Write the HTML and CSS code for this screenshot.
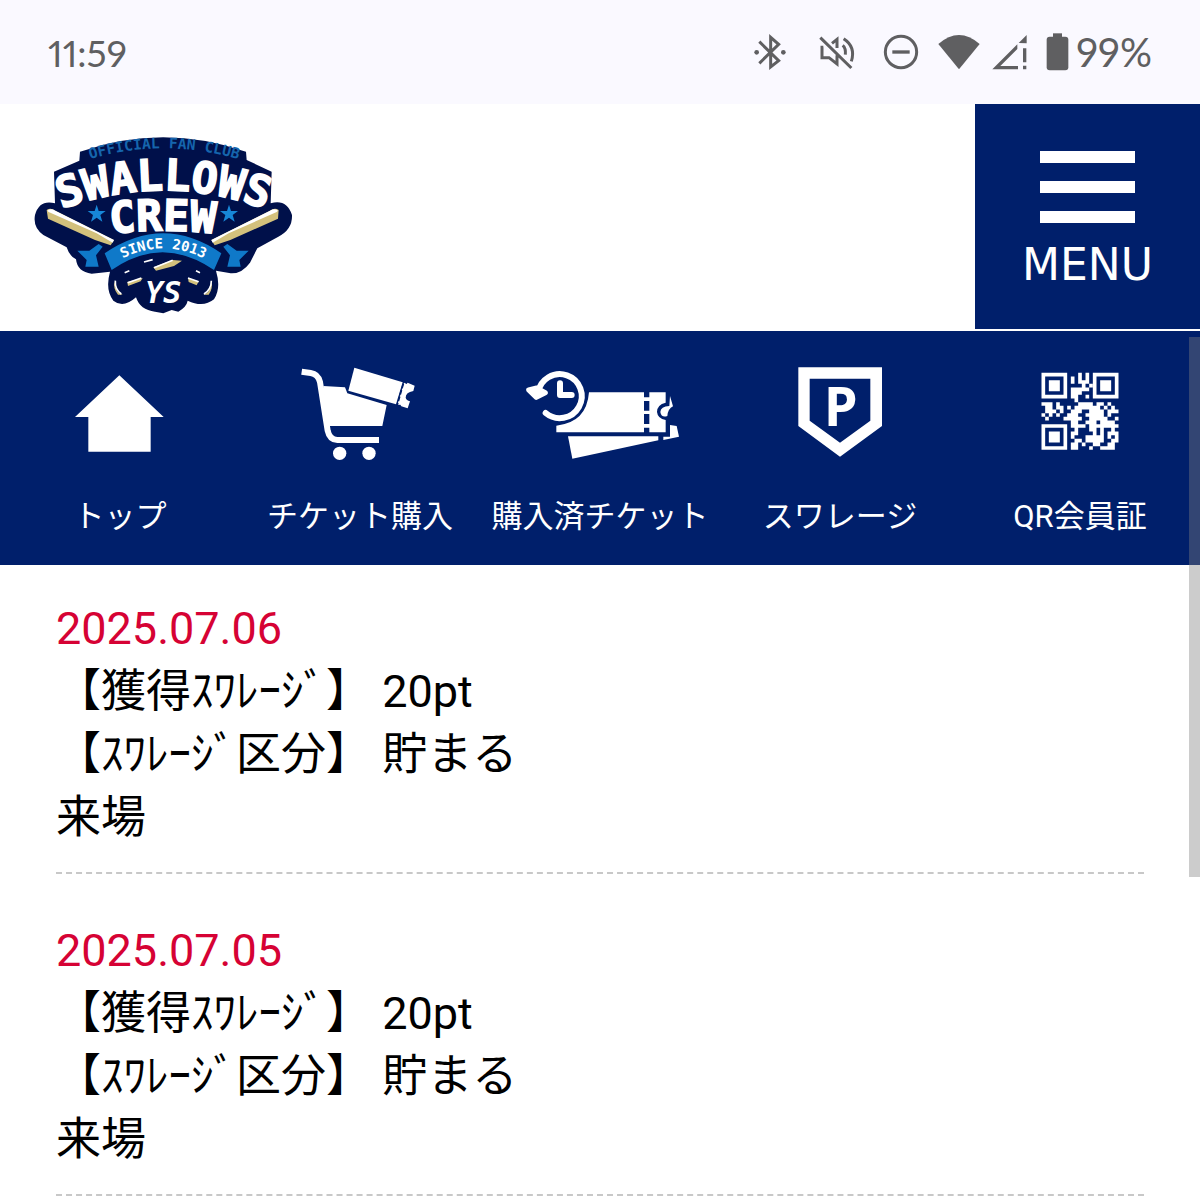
FILE: index.html
```html
<!DOCTYPE html>
<html lang="ja">
<head>
    <meta charset="UTF-8">
    <meta name="viewport" content="width=device-width, initial-scale=1">
    <title>SWALLOWS CREW</title>
    <link rel="stylesheet" href="styles.css">
</head>
<body>
<div class="status-bar">
    <span class="status-time">11:59</span>
    <div class="status-icons">
        <!-- bluetooth -->
        <svg width="64" height="38" viewBox="-6 39 192 114">
            <path d="M58 65L116 122L92 141V52L116 73L58 130" fill="none" stroke="#5f5f61" stroke-width="9"/>
            <circle cx="50" cy="97" r="7"/>
            <circle cx="130" cy="97" r="7"/>
        </svg>
        <!-- sound off -->
        <svg width="70" height="38" viewBox="186 39 210 114">
            <path d="M250 82H246V113H267L291 132V106M276 70L291 58V84M308 76Q318 84 316 104M311 56Q348 80 334 124M241 53L334 144" fill="none" stroke="#5f5f61" stroke-width="9"/>
        </svg>
        <!-- do not disturb -->
        <svg width="58" height="38" viewBox="396 39 174 114">
            <circle cx="483" cy="96" r="47" fill="none" stroke="#5f5f61" stroke-width="9"/>
            <rect x="457" y="91" width="52" height="10"/>
        </svg>
        <!-- wifi -->
        <svg width="58" height="38" viewBox="570 39 174 114">
            <path d="M595 72Q657 18 719 72L657 148Z"/>
        </svg>
        <!-- mobile signal -->
        <svg width="44" height="38" viewBox="744 39 132 114">
            <path d="M757 148L832 73V87L781 138H834V148ZM836 69L860 45V70ZM849 85H859V127H849ZM849 137H859V148H849Z"/>
        </svg>
        <!-- battery -->
        <svg width="42" height="38" viewBox="876 39 126 114">
            <rect x="920" y="50" width="65" height="101" rx="9"/>
            <rect x="939" y="40" width="27" height="14"/>
        </svg>
        <span class="status-battery">99%</span>
    </div>
</div>

<header class="header">
    <a class="logo" href="#" aria-label="SWALLOWS CREW">
        <svg width="261" height="182" viewBox="36 42 783 546">
            <defs>
                <path id="arc-club" d="M182 126Q430 44 684 126"/>
                <path id="arc-name" d="M104 276Q430 146 758 276"/>
                <path id="arc-crew" d="M262 342Q430 322 594 342"/>
                <path id="arc-since" d="M290 425Q428 345 570 425"/>
            </defs>
            <path fill="#00104a" d="M180 95Q430 8 678 95L680 120L755 155L752 250Q800 236 816 285Q818 328 775 350L712 385L690 428Q665 462 632 460L588 452Q604 505 582 538Q550 564 503 542Q500 560 475 575L455 570L430 580L405 575Q360 570 348 532Q310 566 280 542Q255 510 270 455L215 461Q172 456 168 418Q148 408 140 382L70 345Q38 322 45 285Q58 238 105 250L102 155L178 122Z"/>
            <!-- bats -->
            <path fill="#d3c17c" d="M80 270Q92 262 106 272L282 360L272 376L225 360L84 296Z"/>
            <path fill="#fff" d="M82 272Q92 264 106 272L282 360L278 368L230 340L86 276Z"/>
            <path fill="#d3c17c" d="M776 270Q764 262 750 272L574 360L584 376L631 360L774 296Z"/>
            <path fill="#fff" d="M774 272Q764 264 750 272L574 360L578 368L626 340L770 276Z"/>
            <path fill="#d3c17c" d="M400 442L458 420L486 422L462 438L408 452ZM322 486L368 474L362 484L324 498ZM284 484Q286 520 308 524L294 524Q278 506 284 484ZM504 474L536 484L530 496L506 486ZM574 484Q572 520 550 524L566 524Q580 506 574 484Z"/>
            <path stroke="#fff" stroke-width="5" fill="none" d="M402 443L458 421M323 488L364 474M372 426L398 419M504 474L536 485M286 482Q284 508 304 522M574 482Q574 508 552 522M314 458L328 452M528 452L540 458"/>
            <!-- ribbon -->
            <path fill="#0f79c9" d="M254 400Q430 280 604 400L582 450Q427 344 275 450Z"/>
            <path fill="#0f79c9" d="M172 392L208 392L236 372L248 380L228 406L236 440L196 440L200 420ZM686 392L650 392L622 372L610 380L630 406L622 440L662 440L658 420Z"/>
            <!-- stars -->
            <path fill="#1787d8" d="M230 254L236 273L257 273L241 285L247 305L230 293L213 305L219 285L203 273L224 273ZM627 254L633 273L654 273L638 285L644 305L627 293L610 305L616 285L600 273L621 273Z"/>
            <text class="logo-club"><textPath href="#arc-club" startOffset="50%">OFFICIAL FAN CLUB</textPath></text>
            <text class="logo-name"><textPath href="#arc-name" startOffset="50%">SWALLOWS</textPath></text>
            <text class="logo-name"><textPath href="#arc-crew" startOffset="50%">CREW</textPath></text>
            <text class="logo-since"><textPath href="#arc-since" startOffset="50%">SINCE 2013</textPath></text>
            <text class="logo-mark" x="430" y="550">YS</text>
        </svg>
    </a>
    <button class="menu-button" type="button">
        <span class="menu-line"></span>
        <span class="menu-line"></span>
        <span class="menu-line"></span>
        <span class="menu-text">MENU</span>
    </button>
</header>

<nav class="nav">
    <a class="nav-item" href="#">
        <svg class="nav-icon" viewBox="0 0 480 330">
            <path d="M238 46L371 171H332V275H145V171H105Z"/>
        </svg>
        トップ
    </a>
    <a class="nav-item" href="#">
        <svg class="nav-icon" viewBox="0 0 480 330">
            <path d="M65 35L92 39Q114 42 120 66L143 212Q149 240 172 240H297" fill="none" stroke="#fff" stroke-width="18"/>
            <path d="M130 78L195 82L202 100L320 135L307 198H140Z"/>
            <circle cx="179" cy="280" r="20"/>
            <circle cx="267" cy="280" r="20"/>
            <path d="M223 23L368 67L348 133L205 92Z"/>
            <path d="M372 68L380 72L383 68L404 77L400 93Q377 97 377 113Q379 121 390 124L383 145L364 139L361 134L352 135Z"/>
            <path d="M370 71L351 138" stroke="#001f6b" stroke-width="5" stroke-dasharray="14 6"/>
        </svg>
        チケット購入
    </a>
    <a class="nav-item" href="#">
        <svg class="nav-icon" viewBox="0 0 480 330">
            <path d="M54 98A66 66 0 1 1 77 159M120 70V105H155" fill="none" stroke="#fff" stroke-width="18" stroke-linecap="round" stroke-linejoin="round"/>
            <path d="M26 90L49 112L76 98L50 84Z" stroke="#fff" stroke-width="15" stroke-linejoin="round"/>
            <path d="M207 97H372V217H109V197Q200 188 207 97Z"/>
            <path d="M388 97H437V128Q411 134 411 156Q413 176 437 180V217H388Z"/>
            <path d="M370 112H390V123H370ZM370 152H390V162H370ZM370 192H390V203H370Z"/>
            <path d="M144 229H415V241L157 296Z"/>
            <path d="M450 108L459 139Q444 146 442 168Q424 174 421 156Q422 140 448 138Z"/>
            <path d="M450 195L470 198L477 230L430 240V230H450Z"/>
        </svg>
        購入済チケット
    </a>
    <a class="nav-item" href="#">
        <svg class="nav-icon" viewBox="0 0 480 330">
            <path fill-rule="evenodd" d="M115 22H366V198L240 290L115 198ZM149 56V182L240 248L331 182V56Z"/>
            <text class="point-mark" x="242" y="198">P</text>
        </svg>
        スワレージ
    </a>
    <a class="nav-item" href="#">
        <svg class="nav-icon" viewBox="-11 -3 43 30">
            <path fill-rule="evenodd" d="M0 .5H7V7.500H0ZM1 1.500V6.500H6V1.500ZM2 2.500H5V5.500H2ZM14 .5H21V7.500H14ZM15 1.500V6.500H20V1.500ZM16 2.500H19V5.500H16ZM0 14.500H7V21.500H0ZM1 15.500V20.500H6V15.500ZM2 16.500H5V19.500H2Z"/>
            <path stroke="#fff" stroke-width="1" d="M10 1h1M12 1h1M8 2h1M10 2h1M12 2h1M8 3h1M10 3h3M11 4h1M13 4h1M8 5h5M8 6h3M8 7h2M12 7h1M9 8h1
                M0 9h3M4 9h1M10 9h4M15 9h2M18 9h1M1 10h2M4 10h2M7 10h1M9 10h7M17 10h1M19 10h1M1 11h3M5 11h1M8 11h3M13 11h4M18 11h3M0 12h1M2 12h1M4 12h1M7 12h3M12 12h5M18 12h1M1 13h1M6 13h5M13 13h5M20 13h1
                M8 14h2M12 14h3M16 14h4M8 15h4M13 15h5M18 15h3M9 16h1M13 16h2M16 16h1M19 16h1M8 17h2M14 17h1M16 17h1M18 17h3M8 18h1M12 18h5M18 18h1M20 18h1M9 19h2M12 19h5M19 19h2M8 20h2M11 20h1M14 20h2M18 20h2M8 21h2M13 21h1M16 21h4"/>
        </svg>
        QR会員証
    </a>
</nav>

<main>
    <ul class="history">
        <li class="history-item">
            <time class="history-date" datetime="2025-07-06">2025.07.06</time>
            <p>【獲得ｽﾜﾚｰｼﾞ】 20pt</p>
            <p>【ｽﾜﾚｰｼﾞ区分】 貯まる</p>
            <p>来場</p>
        </li>
        <li class="history-item">
            <time class="history-date" datetime="2025-07-05">2025.07.05</time>
            <p>【獲得ｽﾜﾚｰｼﾞ】 20pt</p>
            <p>【ｽﾜﾚｰｼﾞ区分】 貯まる</p>
            <p>来場</p>
        </li>
    </ul>
</main>
<div class="scroll-thumb"></div>
</body>
</html>
```
FILE: styles.css
```css
* {
    box-sizing: border-box;
}

body {
    position: relative;
    margin: 0;
    background-color: #fff;
    color: #000;
    font-family: Roboto, "Noto Sans CJK JP", sans-serif;
}

.status-bar {
    display: flex;
    justify-content: space-between;
    align-items: center;
    height: 104px;
    padding: 0 48px;
    background-color: #faf9ff;
    color: #5f5f61;
    font-family: Lato, sans-serif;
    font-size: 37px;
    font-variant-numeric: proportional-nums;
}

.status-icons {
    display: flex;
    align-items: center;
}

.status-icons svg {
    fill: #5f5f61;
}

.status-battery {
    padding-left: 2px;
    font-size: 40px;
}

.header {
    display: flex;
    justify-content: space-between;
    align-items: flex-start;
    padding-bottom: 2px;
}

.logo {
    padding: 30px 0 0 32px;
}

.logo svg {
    display: block;
}

.logo text {
    font-family: "DejaVu Sans Mono", monospace;
    font-weight: bold;
    text-anchor: middle;
    fill: #fff;
}

.logo .logo-club {
    font-size: 44px;
    fill: #1565ad;
}

.logo .logo-name {
    font-size: 130px;
    stroke: #fff;
    stroke-width: 5px;
}

.logo .logo-since {
    font-size: 42px;
}

.logo .logo-mark {
    font-size: 90px;
    font-style: italic;
}

.menu-button {
    display: flex;
    flex-direction: column;
    align-items: center;
    gap: 18px;
    width: 225px;
    height: 225px;
    padding: 47px 0 0;
    border: 0;
    background-color: #001f6b;
    color: #fff;
}

.menu-line {
    width: 95px;
    height: 12px;
    background-color: #fff;
}

.menu-text {
    font-family: "DejaVu Sans", sans-serif;
    font-size: 44px;
    line-height: 48px;
}

.nav {
    display: grid;
    grid-template-columns: repeat(5, 1fr);
    height: 234px;
    background-color: #001f6b;
}

.nav-item {
    display: flex;
    flex-direction: column;
    align-items: center;
    gap: 24px;
    padding-top: 29px;
    color: #fff;
    font-size: 31px;
    line-height: 46px;
    text-decoration: none;
    white-space: nowrap;
}

.nav-icon {
    width: 160px;
    height: 110px;
    fill: #fff;
}

.point-mark {
    font-family: "Open Sans", sans-serif;
    font-size: 162px;
    font-weight: bold;
    text-anchor: middle;
}

.history {
    margin: 0;
    padding: 32px 56px 0;
    list-style: none;
    font-size: 45px;
    line-height: 63px;
}

.history-item {
    padding-bottom: 23px;
    border-bottom: 2px dashed #c8c8c8;
}

.history-item + .history-item {
    padding-top: 45px;
}

.history-item p {
    margin: 0;
}

.history-date {
    display: block;
    color: #d60234;
}

.scroll-thumb {
    position: absolute;
    top: 337px;
    right: 0;
    width: 11px;
    height: 540px;
    background-color: rgba(128, 128, 128, .4);
}
```
